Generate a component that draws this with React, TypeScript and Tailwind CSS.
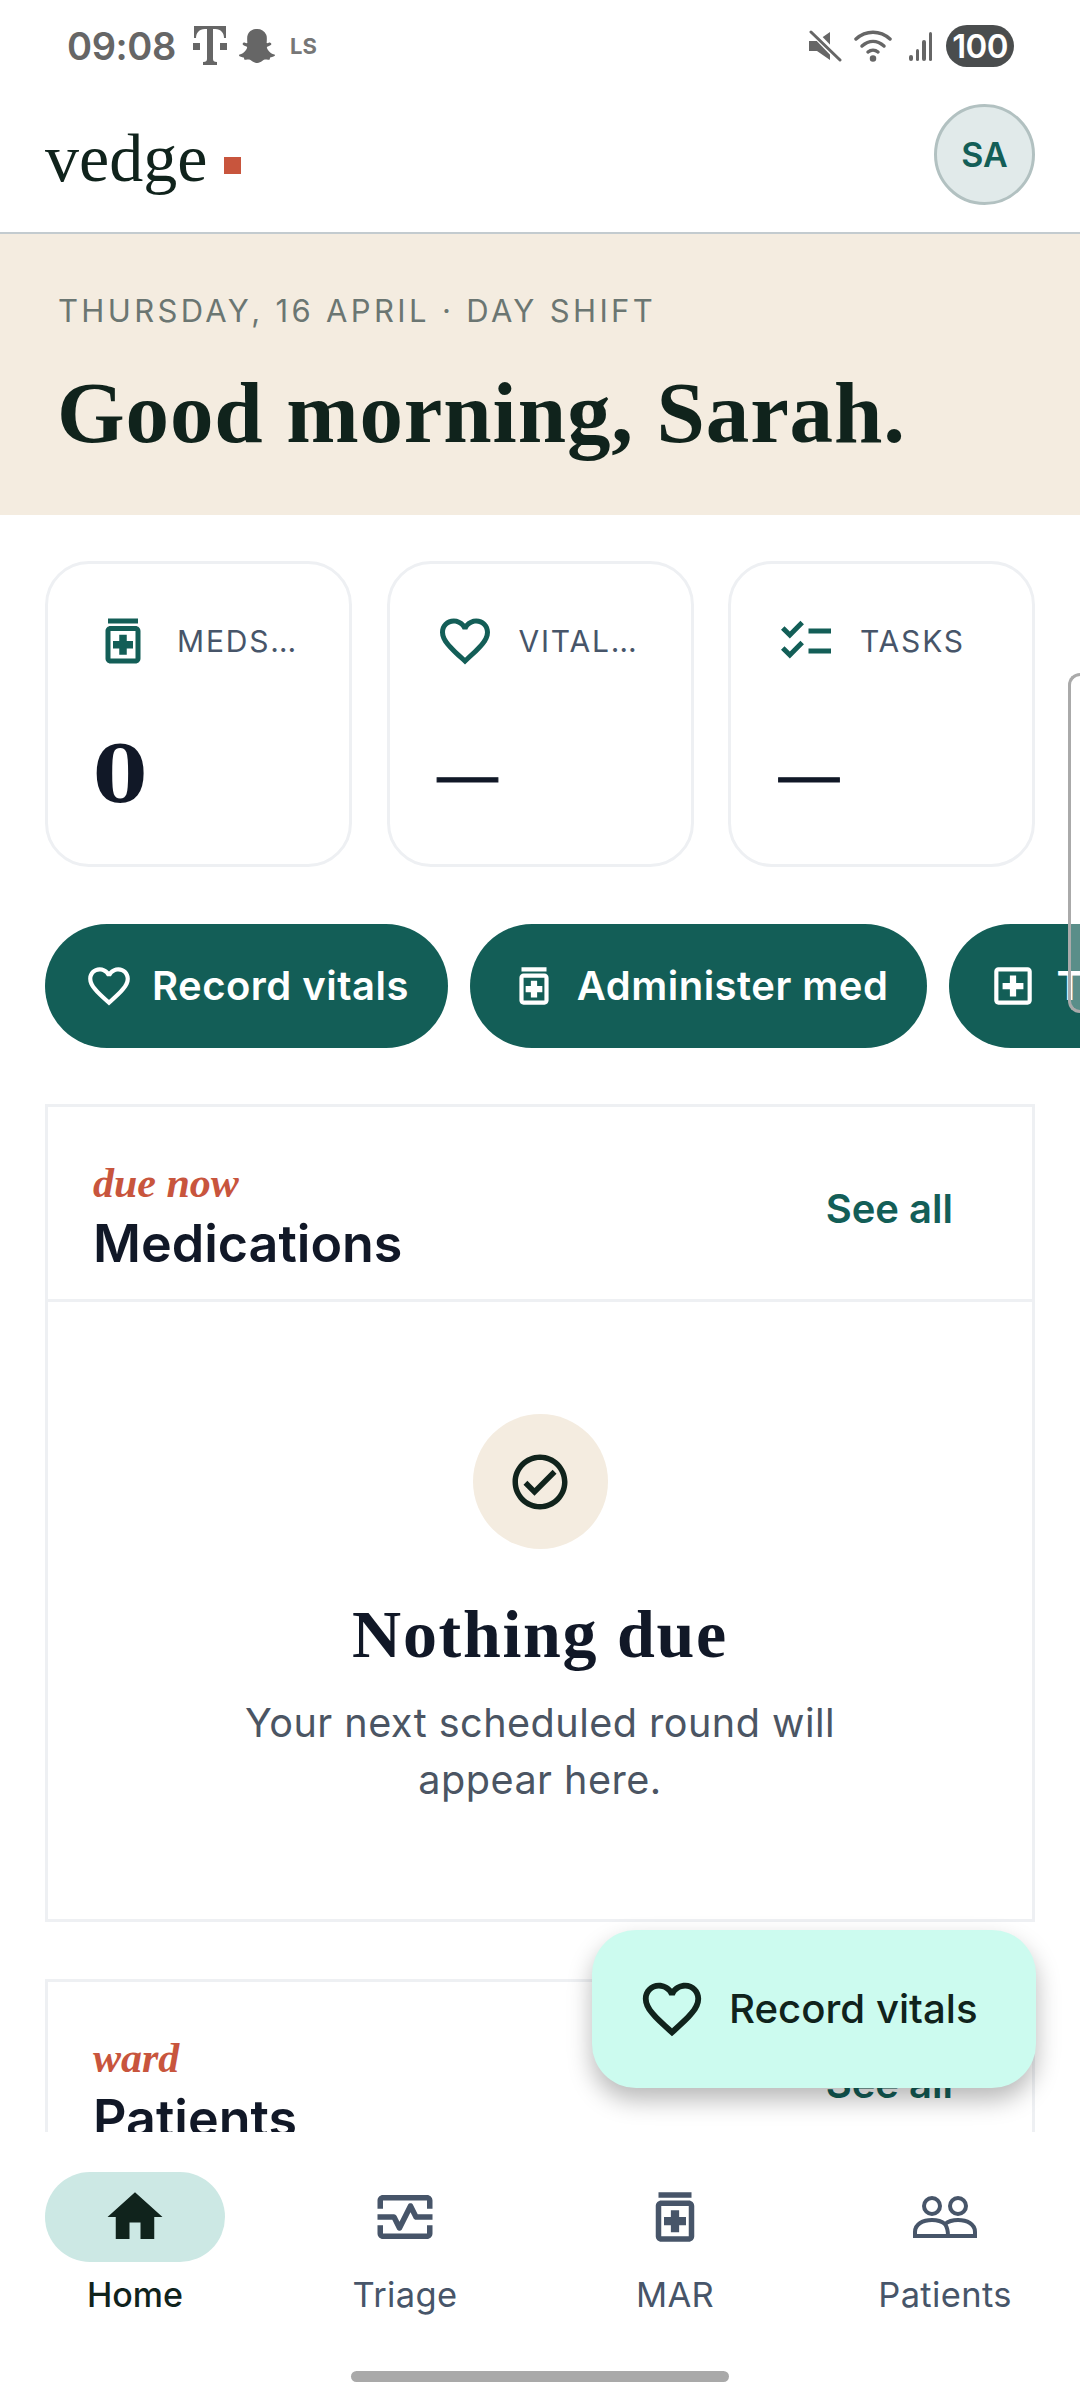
import { FaSnapchatGhost } from 'react-icons/fa';
import {
  MdChecklist,
  MdFavoriteBorder,
  MdHome,
  MdOutlineCheckCircle,
  MdOutlineLocalHospital,
  MdOutlineMedication,
  MdOutlineMonitorHeart,
} from 'react-icons/md';
import type { IconType } from 'react-icons';

const sans = "font-['Inter','Noto_Sans',sans-serif]";
const serif = "font-['Liberation_Serif',serif]";

const TMobileLogo = () => (
  <svg width="34" height="40" viewBox="0 0 34 40" fill="#666">
    <path d="M1 0h32v12h-2c0-5-3-9-9-9h-2v30c0 2 1 3 4 3v3H10v-3c3 0 4-1 4-3V3h-2C6 3 3 7 3 12H1z" />
    <rect x="0" y="17" width="7" height="7" />
    <rect x="27" y="17" width="7" height="7" />
  </svg>
);

const MuteIcon = () => (
  <svg width="34" height="32" viewBox="0 0 34 32">
    <path d="M1 11h8l13-9v28l-13-9H1z" fill="#666" />
    <path d="M2 -1l31 32" stroke="#fff" strokeWidth="7" />
    <path d="M3 2l29 28" stroke="#666" strokeWidth="3" strokeLinecap="round" />
  </svg>
);

const WifiIcon = () => (
  <svg width="38" height="32" viewBox="0 0 38 32" fill="none" stroke="#666" strokeWidth="3.5" strokeLinecap="round">
    <path d="M2 9c10-9 24-9 34 0" />
    <path d="M8 16c7-6 15-6 22 0" />
    <path d="M14 22c3-2.500 7-2.500 10 0" />
    <circle cx="19" cy="28.500" r="1.500" fill="#666" />
  </svg>
);

const SignalIcon = () => (
  <div className="flex h-[30px] items-end gap-[3px]">
    <div className="h-[6px] w-[3.500px] rounded-full bg-[#666]" />
    <div className="h-[12px] w-[3.500px] rounded-full bg-[#666]" />
    <div className="h-[21px] w-[3.500px] rounded-full bg-[#666]" />
    <div className="h-[29px] w-[3.500px] rounded-full bg-[#666]" />
  </div>
);

const PeopleIcon: IconType = ({ className }) => (
  <svg className={className} width="66" height="44" viewBox="0 0 66 44" fill="none" stroke="currentColor" strokeWidth="4">
    <circle cx="20" cy="11" r="8" />
    <circle cx="46" cy="11" r="8" />
    <path d="M3 41v-4C3 29 11 25 20 25c6 0 10 1.500 13 4 3-2.500 7-4 13-4 9 0 17 4 17 12v4z" />
    <path d="M33 29c2 3 3 7 3 12" />
  </svg>
);

const StatusBar = () => (
  <div className="flex h-[90px] shrink-0 items-center justify-between pl-[67px] pr-[66px] pt-[2px]">
    <div className="flex items-center">
      <span className="text-[38px] leading-none font-semibold tracking-[-0.01em] text-[#666]">09:08</span>
      <div className="ml-[17px]">
        <TMobileLogo />
      </div>
      <FaSnapchatGhost className="ml-[12px] text-[#666]" size={36} />
      <span className="ml-[15px] text-[22px] leading-none font-bold text-[#777]">LS</span>
    </div>
    <div className="flex items-center">
      <MuteIcon />
      <div className="ml-[12px]">
        <WifiIcon />
      </div>
      <div className="ml-[17px]">
        <SignalIcon />
      </div>
      <div className="ml-[14px] flex h-[42px] w-[68px] items-center justify-center rounded-full bg-[#4a4d4e] text-[33px] leading-none font-semibold tracking-[-0.02em] text-white">
        100
      </div>
    </div>
  </div>
);

const AppHeader = () => (
  <header className="flex h-[144px] shrink-0 items-center justify-between border-b-[2px] border-[#c3cbcf] pl-[45px] pr-[45px] pb-[2px]">
    <div className="flex items-center pb-[4px]">
      <span className={`${serif} text-[68px] leading-none text-[#10231c]`}>vedge</span>
      <div className="ml-[17px] mt-[14px] h-[17px] w-[17px] bg-[#c8553d]" />
    </div>
    <div className="mb-[12px] flex h-[101px] w-[101px] items-center justify-center rounded-full border-[3px] border-[#b2c1c1] bg-[#e1eaea] text-[34px] font-semibold text-[#135e57]">
      SA
    </div>
  </header>
);

const Banner = () => (
  <section className="h-[281px] shrink-0 bg-[#f4ece0] pl-[58px] pt-[55px]">
    <p className="text-[31px] leading-[44px] tracking-[0.108em] text-[#6b7672]">THURSDAY, 16 APRIL · DAY SHIFT</p>
    <h1 className={`${serif} mt-[30px] -ml-[1px] text-[87px] leading-[100px] font-bold tracking-[0.01em] text-[#10231c]`}>Good morning, Sarah.</h1>
  </section>
);

type Stat = { icon: IconType; label: string; value: string };

const stats: Stat[] = [
  { icon: MdOutlineMedication, label: 'MEDS DUE', value: '0' },
  { icon: MdFavoriteBorder, label: 'VITALS DUE', value: '—' },
  { icon: MdChecklist, label: 'TASKS', value: '—' },
];

const StatCard = ({ icon: Icon, label, value }: Stat) => (
  <div className="h-[306px] w-[307px] shrink-0 rounded-[44px] border-[3px] border-[#eef0f3] px-[45px] pt-[47px]">
    <div className="flex h-[60px] items-center gap-[24px]">
      <Icon className="shrink-0 text-[#135e57]" size={60} />
      <span className="truncate text-[30px] tracking-[0.06em] text-[#475569]">{label}</span>
    </div>
    {value === '0' ? (
      <div className="mt-[54px] h-[100px] font-['DejaVu_Serif',serif] text-[78px] leading-[100px] font-bold text-[#111827]">{value}</div>
    ) : (
      <div className={`${serif} mt-[53px] ml-[3px] h-[100px] text-[60px] leading-[100px] font-bold text-[#111827] [-webkit-text-stroke:1px_#111827]`}>{value}</div>
    )}
  </div>
);

const ChipButton = ({ icon: Icon, label }: { icon: IconType; label: string }) => (
  <button className="flex h-[124px] shrink-0 items-center gap-[18px] rounded-full bg-[#135e57] px-[39px] text-[40px] font-semibold tracking-[0.012em] text-white">
    <Icon className="shrink-0" size={50} />
    {label}
  </button>
);

const SectionHeader = ({ eyebrow, title }: { eyebrow: string; title: string }) => (
  <div className="flex h-[192px] items-start justify-between pl-[45px] pr-[79px] pt-[53px]">
    <div>
      <p className={`${serif} text-[42px] leading-[46px] font-bold italic text-[#c8553d]`}>{eyebrow}</p>
      <h2 className="mt-[5px] text-[52px] leading-[66px] font-semibold text-[#111827]">{title}</h2>
    </div>
    <button className="mt-[24px] text-[40px] leading-[50px] font-semibold text-[#135e57]">See all</button>
  </div>
);

const NavItem = ({ icon: Icon, label, active }: { icon: IconType; label: string; active?: boolean }) => (
  <div className="flex w-[270px] flex-col items-center pt-[40px]">
    <div className={`flex h-[90px] w-[180px] items-center justify-center rounded-full ${active ? 'bg-[#cce8e4]' : ''}`}>
      <Icon className={active ? 'text-[#10231c]' : 'text-[#475569]'} size={66} />
    </div>
    <span className={`mt-[10px] leading-[46px] ${active ? 'text-[34px] font-medium text-[#10231c]' : 'text-[34.500px] font-normal tracking-[0.01em] text-[#475569]'}`}>
      {label}
    </span>
  </div>
);

export default function App() {
  return (
    <div className={`${sans} relative flex h-[2400px] w-[1080px] flex-col overflow-hidden bg-white`}>
      <StatusBar />
      <AppHeader />
      <main className="min-h-0 flex-1 overflow-hidden">
        <Banner />
        <div className="mt-[46px] flex gap-[34.500px] pl-[45px]">
          {stats.map((stat) => (
            <StatCard key={stat.label} {...stat} />
          ))}
        </div>
        <div className="mt-[57px] flex gap-[22px] pl-[45px]">
          <ChipButton icon={MdFavoriteBorder} label="Record vitals" />
          <ChipButton icon={MdOutlineMedication} label="Administer med" />
          <ChipButton icon={MdOutlineLocalHospital} label="Triage patient" />
        </div>
        <section className="mx-[45px] mt-[56px] h-[818px] border-[3px] border-[#eef0f3]">
          <SectionHeader eyebrow="due now" title="Medications" />
          <div className="flex flex-col items-center border-t-[3px] border-[#eef0f3] pt-[112px]">
            <div className="flex h-[135px] w-[135px] items-center justify-center rounded-full bg-[#f4ece0]">
              <MdOutlineCheckCircle className="text-[#10231c]" size={66} />
            </div>
            <h3 className={`${serif} mt-[45px] text-[68px] leading-[80px] font-bold tracking-[0.025em] text-[#111827]`}>Nothing due</h3>
            <p className="mt-[21px] w-[700px] text-center text-[39.600px] leading-[57px] tracking-[0.012em] text-[#4b5563]">
              Your next scheduled round will appear here.
            </p>
          </div>
        </section>
        <section className="mx-[45px] mt-[57px] h-[300px] border-[3px] border-[#eef0f3]">
          <SectionHeader eyebrow="ward" title="Patients" />
        </section>
      </main>
      <nav className="flex h-[268px] shrink-0 flex-col bg-white">
        <div className="flex">
          <NavItem icon={MdHome} label="Home" active />
          <NavItem icon={MdOutlineMonitorHeart} label="Triage" />
          <NavItem icon={MdOutlineMedication} label="MAR" />
          <NavItem icon={PeopleIcon} label="Patients" />
        </div>
        <div className="mx-auto mt-[53px] h-[11px] w-[378px] rounded-full bg-[#a9a9a9]" />
      </nav>
      {/* floating action button */}
      <button className="absolute left-[592px] top-[1930px] flex h-[158px] w-[444px] items-center gap-[22px] rounded-[44px] bg-[#ccfbef] pl-[45px] text-[40.200px] font-medium text-[#10231c] shadow-[0_12px_24px_rgba(0,0,0,0.28)]">
        <MdFavoriteBorder size={70} />
        Record vitals
      </button>
      {/* edge panel handle */}
      <div className="absolute left-[1068px] top-[673px] h-[340px] w-[12px] rounded-l-[12px] border-y-[3px] border-l-[3px] border-[#aaaaaa] bg-white/30" />
    </div>
  );
}
